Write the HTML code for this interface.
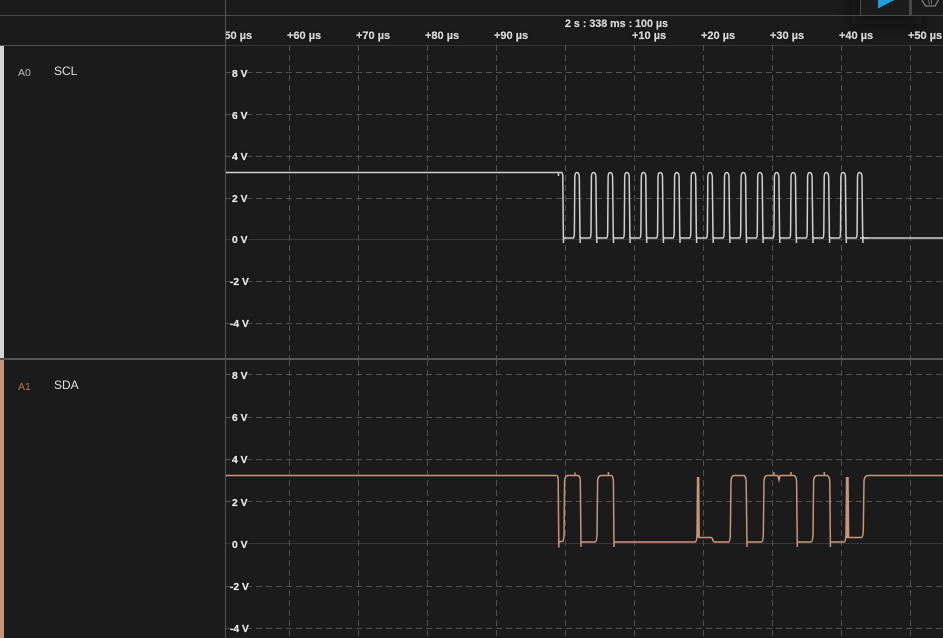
<!DOCTYPE html>
<html><head><meta charset="utf-8"><style>
html,body{margin:0;padding:0;background:#1b1b1b;width:943px;height:638px;overflow:hidden}
svg{display:block;position:absolute;left:0;top:0}
text{font-family:"Liberation Sans",Arial,sans-serif}
.t{font-size:11px;font-weight:700;fill:#d8d8d8;stroke:#d8d8d8;stroke-width:.25px;filter:drop-shadow(0 0 1px #000)}
.v{font-size:10.3px;font-weight:700;fill:#e4e4e4;stroke:#e4e4e4;stroke-width:.3px;filter:drop-shadow(0 0 1px #000)}
.g{stroke:#505050;stroke-width:1;stroke-dasharray:6 4;fill:none}
.s{stroke:#353535;stroke-width:1;fill:none}
.w{fill:none;stroke:#d0d0d0;stroke-width:1.5}
.o{fill:none;stroke:#c9957a;stroke-width:1.5}
</style></head><body>
<svg width="943" height="638" viewBox="0 0 943 638" xmlns="http://www.w3.org/2000/svg">
<defs>
<filter id="b" x="-50%" y="-100%" width="200%" height="300%"><feGaussianBlur stdDeviation="7"/></filter>
<path id="p" d="M-8.3 238H-3.9Q-3 238 -2.9 232L-2.5 177Q-2.3 172.5 -0.4 172.5Q1.8 172.5 2 177L2.7 238M2.9 243V236M2.9 238H8.4"/>
</defs>
<rect width="943" height="638" fill="#1b1b1b"/>
<!-- toolbar shadow -->
<rect x="852" y="-20" width="70" height="44" fill="#0c0c0c" opacity=".7" filter="url(#b)"/>
<!-- header lines -->
<path d="M0 15.5H943" stroke="#4a4a4a" stroke-width="1"/>
<path d="M0 45.5H226" stroke="#525252" stroke-width="1"/>
<path d="M226 45.5H943" stroke="#333" stroke-width="1"/>
<!-- buttons -->
<rect x="860" y="0" width="50" height="15" fill="#1c1c1c"/>
<rect x="860" y="0" width="1" height="15" fill="#4a4a4a"/>
<rect x="909" y="0" width="3" height="15" fill="#484848"/>
<rect x="912" y="0" width="31" height="15" fill="#1a1a1a"/>
<polygon points="878,8.5 878,-10 895.5,-0.6" fill="#1d9fdd"/>
<path d="M922 0L925.5 6H935L938.5 0" fill="none" stroke="#7d7d7d" stroke-width="1.3"/>
<path d="M928.5 0L929.5 4.5M931.5 0V4.5" fill="none" stroke="#6a6a6a" stroke-width="1"/>
<!-- solid zero lines -->
<path class="s" d="M226 239.5H943M226 543.5H943"/>
<!-- vertical grid -->
<path class="g" d="M289.5 45V358M358.5 45V358M427.5 45V358M496.5 45V358M565.5 45V358M634.5 45V358M703.5 45V358M772.5 45V358M841.5 45V358M910.5 45V358"/>
<path class="g" d="M289.5 360V638M358.5 360V638M427.5 360V638M496.5 360V638M565.5 360V638M634.5 360V638M703.5 360V638M772.5 360V638M841.5 360V638M910.5 360V638"/>
<!-- horizontal grid -->
<path class="g" d="M226 72.5H943M226 114.5H943M226 156.5H943M226 198.5H943M226 281.5H943M226 323.5H943"/>
<path class="g" d="M226 374.5H943M226 417.5H943M226 459.5H943M226 501.5H943M226 586.5H943M226 628.5H943"/>
<!-- label masks -->
<path fill="#1b1b1b" d="M231 66h16v13h-16zM231 108h16v13h-16zM231 150h16v13h-16zM231 192h16v13h-16zM231 233h16v13h-16zM231 275h16v13h-16zM231 317h16v13h-16zM231 368h16v13h-16zM231 411h16v13h-16zM231 453h16v13h-16zM231 495h16v13h-16zM231 537h16v13h-16zM231 580h16v13h-16zM231 622h16v13h-16z"/>
<!-- frames -->
<path d="M225.5 0V638" stroke="#555" stroke-width="1"/>
<rect x="0" y="358" width="943" height="2" fill="#555"/>
<rect x="0" y="46" width="4" height="312" fill="#d4d4d4"/>
<rect x="0" y="360" width="4" height="278" fill="#c9927a"/>
<!-- SCL trace -->
<path class="w" d="M226 172.5H558.5V176V172.5H561.5Q562.6 172.5 562.8 176L563.4 243V238H569"/>
<g class="w">
<use href="#p" x="577.3"/><use href="#p" x="593.9"/><use href="#p" x="610.6"/><use href="#p" x="627.2"/><use href="#p" x="643.8"/><use href="#p" x="660.5"/>
<use href="#p" x="677.1"/><use href="#p" x="693.7"/><use href="#p" x="710.3"/><use href="#p" x="727"/><use href="#p" x="743.6"/><use href="#p" x="760.2"/>
<use href="#p" x="776.9"/><use href="#p" x="793.5"/><use href="#p" x="810.1"/><use href="#p" x="826.7"/><use href="#p" x="843.4"/><use href="#p" x="860"/>
</g>
<path class="w" d="M860 238H943"/>
<!-- SDA trace -->
<path class="o" d="M226 475.5H556.5Q558 475.5 558.2 480L558.8 547.5V543L560 541.5H562.5Q563.6 541.5 564 535L564.6 481Q565 475.8 568 475.5H575V472.5V475.5H577.5Q580 475.5 580.3 480L581 547V542H595Q596.6 542 597 535L597.6 481Q598 475.8 601 475.5H608.4V472V475.5H611Q613 475.5 613.4 481L614 547V542H695Q696.6 542 697 535L697.6 477V537.5L698.6 477L699.2 537.5H711Q712.2 537.5 712.8 540Q713.4 542 715 542H728.5Q730 542 730.3 535L731 481Q731.4 475.8 734 475.5H741Q743 475.5 744 475.5Q746 477 746.2 482L747 547V542H761.5Q763 542 763.3 535L764 481Q764.4 475.8 767 475.5H774V472V475.5H777.8L779 480L780.2 475.5H791V472V475.5H794Q796.4 476 796.6 482L797.3 547V542H811Q812.6 542 813 535L813.6 481Q814 475.8 817 475.5H824.3V472V475.5H827Q829.6 476 829.8 482L830.4 547V542H844Q845.6 542 846 535L846.6 477L847.3 538L848 477L848.6 537.5H861.5Q863 537.5 863.3 530L864 481Q864.4 475.8 868 475.5H943"/>
<!-- time labels -->
<g class="t">
<text x="565" y="27" style="font-size:10.7px">2 s : 338 ms : 100 µs</text>
<text x="287" y="39">+60 µs</text>
<text x="356" y="39">+70 µs</text>
<text x="425" y="39">+80 µs</text>
<text x="494" y="39">+90 µs</text>
<text x="632" y="39">+10 µs</text>
<text x="701" y="39">+20 µs</text>
<text x="770" y="39">+30 µs</text>
<text x="839" y="39">+40 µs</text>
<text x="908" y="39">+50 µs</text>
</g>
<svg x="226" y="28" width="40" height="16"><text class="t" x="-8" y="11">+50 µs</text></svg>
<!-- volt labels -->
<g class="v">
<text x="232" y="77">8 V</text><text x="232" y="119">6 V</text><text x="232" y="160">4 V</text><text x="232" y="202">2 V</text><text x="232" y="243">0 V</text><text x="230" y="285">-2 V</text><text x="230" y="327">-4 V</text>
<text x="232" y="379">8 V</text><text x="232" y="421">6 V</text><text x="232" y="463">4 V</text><text x="232" y="506">2 V</text><text x="232" y="548">0 V</text><text x="230" y="590">-2 V</text><text x="230" y="632">-4 V</text>
</g>
<!-- channel labels -->
<text x="18" y="76" font-size="10.5" fill="#bcbcbc">A0</text>
<text x="54" y="75" font-size="12" fill="#e0e0e0">SCL</text>
<text x="18" y="390" font-size="10.5" fill="#b9714f">A1</text>
<text x="54" y="389" font-size="12" fill="#e0e0e0">SDA</text>
</svg>
</body></html>
